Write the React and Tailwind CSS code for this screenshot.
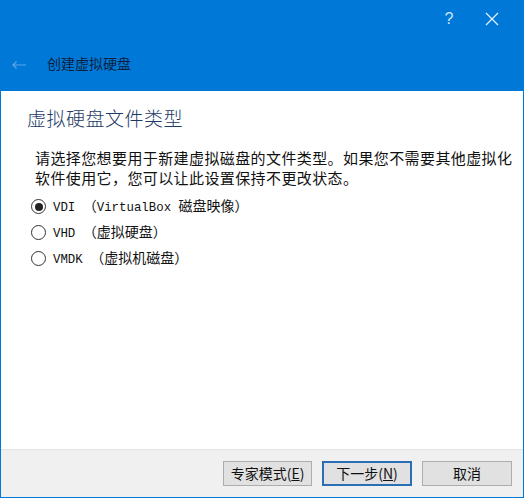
import React, { useState } from 'react';

const cjk = { fontFamily: '"Noto Sans CJK SC", "Noto Sans", sans-serif' };
const mono = { fontFamily: '"Liberation Mono", "Noto Sans CJK SC", monospace' };

const options = [
    { id: 'vdi', code: 'VDI', latin: 'VirtualBox ', desc: '磁盘映像' },
    { id: 'vhd', code: 'VHD', latin: '', desc: '虚拟硬盘' },
    { id: 'vmdk', code: 'VMDK', latin: '', desc: '虚拟机磁盘' },
];

const Radio = ({ checked }) => (
    <span className="w-[15px] h-[15px] rounded-full border border-[#333] bg-white flex items-center justify-center shrink-0">
        {checked && <span className="w-[8px] h-[8px] rounded-full bg-[#222]" />}
    </span>
);

const App = () => {
    const [type, setType] = useState('vdi');

    return (
        <div className="w-[524px] h-[498px] flex flex-col bg-[#0078d7] overflow-hidden" style={cjk}>
            {/* title bar */}
            <div className="h-[38px] flex items-center justify-end text-white">
                <span className="w-[22px] text-center text-[16px] text-[#cfe6fb]" style={{ fontFamily: '"Liberation Sans", sans-serif' }}>?</span>
                <span className="w-[64px] flex justify-center">
                    <svg width="14" height="14" viewBox="0 0 14 14" stroke="#e6f2fc" strokeWidth="1.2">
                        <path d="M1 1 L13 13 M13 1 L1 13" />
                    </svg>
                </span>
            </div>

            {/* wizard header */}
            <div className="h-[53px] flex items-center pl-[11px]">
                <svg width="16" height="10" viewBox="0 0 16 10" fill="none" stroke="#5fa6e6" strokeWidth="1.2">
                    <path d="M15 5 H2 M5.5 1.5 L2 5 L5.5 8.5" />
                </svg>
                <span className="ml-[20px] text-[14px] text-[#0a1f3d] mb-[3px]">创建虚拟硬盘</span>
            </div>

            {/* body */}
            <div className="flex-1 mx-[1px] bg-white flex flex-col">
                <div className="pl-[26px] pt-[14px] text-[19px] text-[#1e3a66] leading-[26px] font-light tracking-[0.5px]">虚拟硬盘文件类型</div>
                <p className="pl-[34px] mt-[17px] text-[15px] tracking-[0.4px] leading-[20px] text-[#111] whitespace-nowrap">
                    请选择您想要用于新建虚拟磁盘的文件类型。如果您不需要其他虚拟化<br />
                    软件使用它，您可以让此设置保持不更改状态。
                </p>
                <div className="pl-[30px] mt-[11px] flex flex-col gap-[11px]">
                    {options.map(o => (
                        <label key={o.id} className="flex items-center gap-[7px] h-[15px] cursor-pointer" onClick={() => setType(o.id)}>
                            <Radio checked={type === o.id} />
                            <span className="text-[12.4px] text-[#111] whitespace-pre" style={mono}>
                                {o.code} <span className="text-[14px]" style={cjk}>（</span>{o.latin}<span className="text-[14px]" style={cjk}>{o.desc}）</span>
                            </span>
                        </label>
                    ))}
                </div>
            </div>

            {/* footer */}
            <div className="h-[48px] mx-[1px] mb-[1px] bg-[#f0f0f0] border-t border-[#e3e3e3] flex items-center justify-end gap-[10px] pr-[11px] pb-[1px]">
                <button className="w-[89px] h-[25px] bg-[#e1e1e1] border border-[#adadad] text-[14px] text-[#111]">专家模式(<u>E</u>)</button>
                <button className="w-[90px] h-[25px] bg-[#e1e1e1] border-2 border-[#2a6fb5] text-[14px] text-[#111]">下一步(<u>N</u>)</button>
                <button className="w-[90px] h-[25px] bg-[#e1e1e1] border border-[#adadad] text-[14px] text-[#111]">取消</button>
            </div>
        </div>
    );
};

export default App;
